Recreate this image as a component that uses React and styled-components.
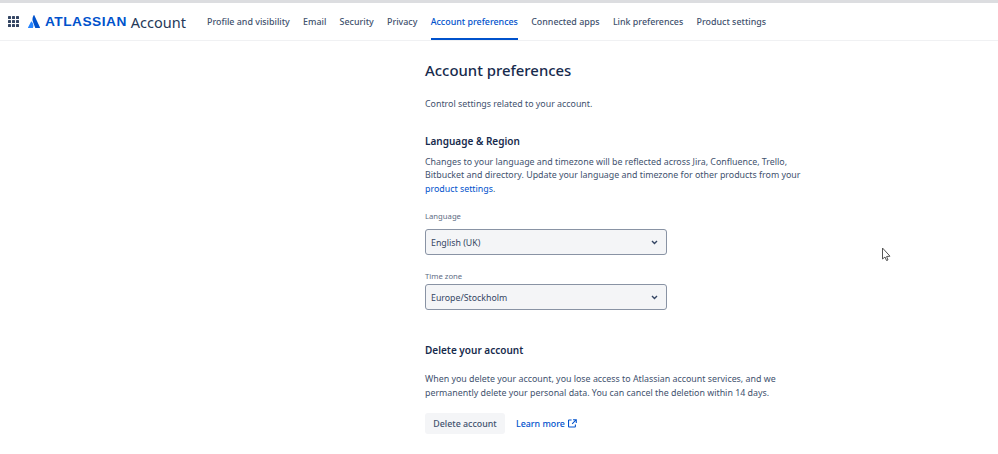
import styled, { createGlobalStyle } from 'styled-components';

const GlobalStyle = createGlobalStyle`
  html, body {
    margin: 0;
    padding: 0;
    background: #fff;
  }
  body {
    font-family: "Noto Sans", "Open Sans", sans-serif;
    color: #172b4d;
    overflow: hidden;
  }
`;

const Page = styled.div`
  position: relative;
  width: 998px;
  height: 454px;
  overflow: hidden;
  border-top: 3px solid #dcdde0;
  box-sizing: border-box;
`;

const Header = styled.header`
  display: flex;
  align-items: stretch;
  height: 37px;
  padding-left: 8px;
  border-bottom: 1px solid #f0f1f3;
`;

const Brand = styled.div`
  display: flex;
  align-items: center;
  width: 199px;
  flex-shrink: 0;
`;

const BrandMark = styled.span`
  display: flex;
  margin-left: 9px;
`;

const BrandName = styled.span`
  margin-left: 5px;
  font-family: "Liberation Sans", sans-serif;
  font-size: 13.7px;
  font-weight: 700;
  letter-spacing: 0.5px;
  color: #0052cc;
`;

const BrandProduct = styled.span`
  margin-left: 4px;
  font-size: 14.5px;
  color: #253858;
`;

const Nav = styled.nav`
  display: flex;
  gap: 13.3px;
`;

const NavItem = styled.a`
  display: flex;
  align-items: center;
  height: 34px;
  padding-top: 1px;
  font-size: 8.9px;
  font-weight: 500;
  color: ${p => (p.$active ? '#0052cc' : '#42526e')};
  border-bottom: 2px solid ${p => (p.$active ? '#0052cc' : 'transparent')};
  white-space: nowrap;
`;

const Main = styled.main`
  width: 380px;
  margin-left: 425px;
`;

const Title = styled.h1`
  margin: 19px 0 0;
  font-size: 14.9px;
  line-height: 20px;
  font-weight: 500;
  color: #172b4d;
`;

const Text = styled.p`
  margin: ${p => p.$top}px 0 0;
  font-size: 8.85px;
  line-height: 13.5px;
  color: #42526e;
`;

const SectionTitle = styled.h2`
  margin: ${p => p.$top}px 0 0;
  font-size: 10px;
  line-height: 14px;
  font-weight: 600;
  color: #172b4d;
`;

const Link = styled.a`
  color: #0052cc;
`;

const Label = styled.label`
  display: block;
  margin: ${p => p.$top}px 0 0;
  font-size: 7.7px;
  line-height: 12px;
  color: #5e6c84;
`;

const SelectBox = styled.div`
  display: flex;
  align-items: center;
  justify-content: space-between;
  width: 241.5px;
  height: 26px;
  margin-top: ${p => p.$top}px;
  padding: 1px 8px 0 5px;
  box-sizing: border-box;
  background: #f4f5f7;
  border: 1px solid #8993a4;
  border-radius: 3px;
  font-size: 8.8px;
  color: #344563;
`;

const Actions = styled.div`
  display: flex;
  align-items: center;
  gap: 11px;
  margin-top: 13px;
`;

const Button = styled.button`
  width: 80px;
  height: 21px;
  padding: 0;
  border: 0;
  border-radius: 3px;
  background: #f4f5f7;
  font-family: inherit;
  font-size: 8.85px;
  font-weight: 500;
  color: #42526e;
`;

const LearnMore = styled.a`
  display: flex;
  align-items: center;
  gap: 3px;
  font-size: 8.85px;
  font-weight: 500;
  color: #0052cc;
`;

const Cursor = styled.svg`
  position: absolute;
  left: 881px;
  top: 244px;
`;

function AppGrid() {
  const dots = [];
  for (let y = 0; y < 3; y++) {
    for (let x = 0; x < 3; x++) {
      dots.push(<rect key={`${x}-${y}`} x={x * 4} y={y * 4} width="3" height="3" rx="0.6" fill="#344563" />);
    }
  }
  return (
    <svg width="11" height="11" viewBox="0 0 11 11">
      {dots}
    </svg>
  );
}

function Chevron() {
  return (
    <svg width="7" height="5" viewBox="0 0 7 5">
      <path d="M1 1 L3.5 3.5 L6 1" fill="none" stroke="#344563" strokeWidth="1.4" />
    </svg>
  );
}

export default function App() {
  const tabs = [
    'Profile and visibility',
    'Email',
    'Security',
    'Privacy',
    'Account preferences',
    'Connected apps',
    'Link preferences',
    'Product settings',
  ];

  return (
    <>
      <GlobalStyle />
      <Page>
        <Header>
          <Brand>
            <AppGrid />
            <BrandMark>
              <svg width="12" height="13" viewBox="0 0 12 13">
                <path d="M3.6 6.6 C3.4 6.4 3.1 6.4 3 6.7 L0 12.4 C-0.1 12.7 0.1 13 0.4 13 H4.6 C4.8 13 4.9 12.9 5 12.7 C5.8 11 5.4 8.6 3.6 6.6 Z" fill="#2684ff" />
                <path d="M5.7 0.2 C4.2 2.5 4.1 5.2 5.1 7.2 L7.2 12.7 C7.3 12.9 7.4 13 7.6 13 H11.6 C11.9 13 12.1 12.7 12 12.4 L6.3 0.2 C6.2 -0.1 5.8 -0.1 5.7 0.2 Z" fill="#0052cc" />
              </svg>
            </BrandMark>
            <BrandName>ATLASSIAN</BrandName>
            <BrandProduct>Account</BrandProduct>
          </Brand>
          <Nav>
            {tabs.map(tab => (
              <NavItem key={tab} $active={tab === 'Account preferences'}>{tab}</NavItem>
            ))}
          </Nav>
        </Header>
        <Main>
          <Title>Account preferences</Title>
          <Text $top={18}>Control settings related to your account.</Text>
          <SectionTitle $top={22}>Language &amp; Region</SectionTitle>
          <Text $top={8}>
            Changes to your language and timezone will be reflected across Jira, Confluence, Trello,
            Bitbucket and directory. Update your language and timezone for other products from your{' '}
            <Link>product settings</Link>.
          </Text>
          <Label $top={14}>Language</Label>
          <SelectBox $top={7}>
            English (UK)
            <Chevron />
          </SelectBox>
          <Label $top={15}>Time zone</Label>
          <SelectBox $top={2}>
            Europe/Stockholm
            <Chevron />
          </SelectBox>
          <SectionTitle $top={33}>Delete your account</SectionTitle>
          <Text $top={16}>
            When you delete your account, you lose access to Atlassian account services, and we
            permanently delete your personal data. You can cancel the deletion within 14 days.
          </Text>
          <Actions>
            <Button>Delete account</Button>
            <LearnMore>
              Learn more
              <svg width="9" height="9" viewBox="0 0 10 10" fill="none" stroke="#0052cc" strokeWidth="1.2">
                <path d="M4 1.2 H1.2 a0.6 0.6 0 0 0 -0.6 0.6 V8.2 a0.6 0.6 0 0 0 0.6 0.6 H7.6 a0.6 0.6 0 0 0 0.6 -0.6 V6" />
                <path d="M5.6 0.8 H9.2 V4.4 M9.2 0.8 L4.6 5.4" />
              </svg>
            </LearnMore>
          </Actions>
        </Main>
        <Cursor width="10" height="15" viewBox="0 0 10 15">
          <path d="M1.5 1 V12 L4 10 L5.5 13.5 L7 13 L5.6 9.5 L9 9.2 Z" fill="#fff" stroke="#555" strokeWidth="1" />
        </Cursor>
      </Page>
    </>
  );
}
